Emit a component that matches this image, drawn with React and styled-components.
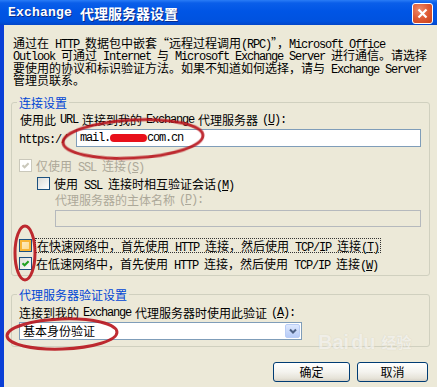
import React from 'react'
import styled, { createGlobalStyle } from 'styled-components'

const Global = createGlobalStyle`
  html, body { margin: 0; padding: 0; background: #fff; }
  body { font-family: "Noto Sans CJK SC", "DejaVu Sans", sans-serif; }
`

const Lat = styled.span`
  font-family: "Liberation Mono", "DejaVu Sans Mono", monospace;
  font-size: 12px;
  letter-spacing: -1.2px;
  line-height: 0;
`

// split ascii runs into the narrow mono font, "&X" underlines X
const mix = (s) =>
  s.split(/([\x20-\x7e]+)/).map((part, i) => {
    if (!part) return null
    if (/^[\x20-\x7e]+$/.test(part)) {
      const bits = part.split(/&(.)/)
      return (
        <Lat key={i}>
          {bits.map((b, j) => (j % 2 ? <u key={j}>{b}</u> : b))}
        </Lat>
      )
    }
    return <React.Fragment key={i}>{part}</React.Fragment>
  })

const Window = styled.div`
  position: relative;
  width: 437px;
  height: 387px;
  overflow: hidden;
  background: #ece9d8;
  font-size: 12px;
  color: #000;
`

const TitleBar = styled.div`
  height: 25px;
  display: flex;
  align-items: center;
  justify-content: space-between;
  padding: 0 4px 0 8px;
  background: linear-gradient(#2a7cf6 0%, #0a5ee9 12%, #0055e5 45%, #0052df 85%, #0346c9 100%);
`

const Title = styled.div`
  color: #fff;
  font-weight: bold;
  font-size: 14px;
  line-height: 16px;
  text-shadow: 1px 1px 0 #0a2c8a;
  display: flex;
  align-items: center;
  gap: 8px;
`

const TitleLat = styled.span`
  font-family: "Liberation Mono", monospace;
  font-size: 13px;
  letter-spacing: 0.2px;
`

const Close = styled.div`
  width: 19px;
  height: 19px;
  border: 1px solid #fff;
  border-radius: 3px;
  background: radial-gradient(circle at 35% 30%, #ee8b6c 0%, #df5a33 50%, #c7401a 100%);
  display: flex;
  align-items: center;
  justify-content: center;
  margin-top: 1px;
`

const Body = styled.div`
  height: 362px;
  box-sizing: border-box;
  border-left: 4px solid #0a3fd6;
  padding: 0 7px;
  display: flex;
  flex-direction: column;
  & > * { flex-shrink: 0; }
`

const Desc = styled.div`
  margin: 12px 0 0 2px;
  white-space: nowrap;
`

const DescLine = styled.div`
  height: 12.4px;
  line-height: 12.4px;
`

const Group = styled.fieldset`
  margin: ${(p) => p.$top}px 0 0 0;
  padding: 0 8px ${(p) => p.$bottom}px 7px;
  border: 1px solid #d0d0bf;
  border-radius: 3px;
  min-inline-size: 0;
  display: flex;
  flex-direction: column;
  & > * { flex-shrink: 0; }
`

const Legend = styled.legend`
  color: #0046d5;
  padding: 0 2px;
  margin-left: -2px;
  line-height: 14px;
  font-size: 12px;
`

const Line = styled.div`
  height: 14px;
  line-height: 14px;
  white-space: nowrap;
  margin-top: ${(p) => p.$top || 0}px;
  margin-left: ${(p) => p.$indent || 0}px;
  color: ${(p) => (p.$disabled ? '#aca899' : '#000')};
  display: flex;
  align-items: center;
  gap: 4px;
`

const UrlRow = styled.div`
  display: flex;
  align-items: center;
  gap: 9px;
  margin-top: 2px;
`

const Field = styled.div`
  flex: ${(p) => (p.$grow ? '1 1 auto' : 'none')};
  height: ${(p) => p.$h || 18}px;
  box-sizing: border-box;
  border: 1px solid ${(p) => (p.$disabled ? '#b5b9bd' : '#7f9db9')};
  background: ${(p) => (p.$disabled ? '#ece9d8' : '#fff')};
  display: flex;
  align-items: center;
  padding-left: 3px;
  margin-top: ${(p) => p.$top || 0}px;
  margin-left: ${(p) => p.$indent || 0}px;
  white-space: nowrap;
`

const Blot = styled.span`
  display: inline-block;
  width: 37px;
  height: 8px;
  border-radius: 5px;
  background: #e8101a;
`

const Box = styled.span`
  flex: none;
  width: 13px;
  height: 13px;
  box-sizing: border-box;
  border: 1px solid ${(p) => (p.$state === 'disabled' ? '#cac8bb' : '#1c5180')};
  background: ${(p) =>
    p.$state === 'disabled'
      ? '#fff'
      : p.$state === 'hot'
      ? 'linear-gradient(135deg, #fff0cf, #fbd783)'
      : 'linear-gradient(135deg, #dcdcd7, #ffffff)'};
  box-shadow: ${(p) => (p.$state === 'hot' ? 'inset 0 0 0 2px #f8b636' : 'none')};
  display: flex;
  align-items: center;
  justify-content: center;
`

const Focus = styled.span`
  outline: 1px dotted #333;
  padding: 0 1px;
  line-height: 13px;
`

const Check = ({ color }) => (
  <svg width="9" height="9" viewBox="0 0 9 9">
    <polyline points="1.5,4.2 3.6,6.3 7.6,2.2" fill="none" stroke={color} strokeWidth="2" />
  </svg>
)

const Select = styled.div`
  width: 283px;
  height: 18px;
  box-sizing: border-box;
  border: 1px solid #7f9db9;
  background: #fff;
  display: flex;
  align-items: center;
  justify-content: space-between;
  padding: 0 1px 0 3px;
  margin-top: 2px;
`

const DropBtn = styled.span`
  width: 15px;
  height: 14px;
  box-sizing: border-box;
  border: 1px solid #b9cdf6;
  border-radius: 2px;
  background: linear-gradient(#dde8fe, #b6cbf7);
  display: flex;
  align-items: center;
  justify-content: center;
`

const Buttons = styled.div`
  display: flex;
  justify-content: flex-end;
  gap: 7px;
  margin: 15px 2px 0 0;
`

const Button = styled.div`
  width: ${(p) => p.$w}px;
  height: 20px;
  box-sizing: border-box;
  border: 1px solid #003c74;
  border-radius: 3px;
  background: linear-gradient(#ffffff 0%, #f4f3ee 50%, #e6e3d8 85%, #d6d0c5 100%);
  display: flex;
  align-items: center;
  justify-content: center;
  font-size: 12px;
`

const Marks = styled.svg`
  position: absolute;
  left: 0;
  top: 0;
  pointer-events: none;
`

const Watermark = styled.div`
  position: absolute;
  left: 318px;
  top: 332px;
  color: rgba(255, 255, 255, 0.8);
  text-shadow: 0 0 1px #c4c0b4;
  font-family: "Liberation Sans", sans-serif;
  font-weight: bold;
  font-size: 20px;
  line-height: 20px;
  display: flex;
  align-items: flex-end;
  gap: 2px;
  opacity: 0.7;
`

const Small = styled.span`
  font-family: "Noto Sans CJK SC", sans-serif;
  font-size: 15px;
  margin-left: 4px;
`

export default function App() {
  return (
    <>
      <Global />
      <Window>
        <TitleBar>
          <Title>
            <TitleLat>Exchange</TitleLat>
            <span>代理服务器设置</span>
          </Title>
          <Close>
            <svg width="11" height="11" viewBox="0 0 11 11">
              <path d="M1.5 1.5 L9.5 9.5 M9.5 1.5 L1.5 9.5" stroke="#fff" strokeWidth="2.2" />
            </svg>
          </Close>
        </TitleBar>
        <Body>
          <Desc>
            <DescLine>{mix('通过在 HTTP 数据包中嵌套“远程过程调用(RPC)”，Microsoft Office')}</DescLine>
            <DescLine>{mix('Outlook 可通过 Internet 与 Microsoft Exchange Server 进行通信。请选择')}</DescLine>
            <DescLine>{mix('要使用的协议和标识验证方法。如果不知道如何选择，请与 Exchange Server')}</DescLine>
            <DescLine>{mix('管理员联系。')}</DescLine>
          </Desc>

          <Group $top={9} $bottom={4}>
            <Legend>连接设置</Legend>
            <Line $top={3} $indent={1}>{mix('使用此 URL 连接到我的 Exchange 代理服务器(&U):')}</Line>
            <UrlRow>
              <span>{mix('https://')}</span>
              <Field $grow>
                <Lat>mail.</Lat>
                <Blot />
                <Lat>com.cn</Lat>
              </Field>
            </UrlRow>
            <Line $top={12} $disabled>
              <Box $state="disabled">
                <Check color="#cac8bb" />
              </Box>
              <span>{mix('仅使用 SSL 连接(&S)')}</span>
            </Line>
            <Line $top={4} $indent={18}>
              <Box />
              <span>{mix('使用 SSL 连接时相互验证会话(&M)')}</span>
            </Line>
            <Line $top={2} $indent={36} $disabled>
              {mix('代理服务器的主体名称(&P):')}
            </Line>
            <Field $top={3} $indent={36} $h={17} $disabled />
            <Line $top={12}>
              <Box $state="hot" />
              <Focus>{mix('在快速网络中，首先使用 HTTP 连接，然后使用 TCP/IP 连接(&T)')}</Focus>
            </Line>
            <Line $top={4}>
              <Box>
                <Check color="#21a121" />
              </Box>
              <span>{mix('在低速网络中，首先使用 HTTP 连接，然后使用 TCP/IP 连接(&W)')}</span>
            </Line>
          </Group>

          <Group $top={12} $bottom={6}>
            <Legend>代理服务器验证设置</Legend>
            <Line $top={4}>{mix('连接到我的 Exchange 代理服务器时使用此验证(&A):')}</Line>
            <Select>
              <span>基本身份验证</span>
              <DropBtn>
                <svg width="8" height="6" viewBox="0 0 8 6">
                  <polyline points="1,1.5 4,4.5 7,1.5" fill="none" stroke="#4d6185" strokeWidth="2" />
                </svg>
              </DropBtn>
            </Select>
          </Group>

          <Buttons>
            <Button $w={77}>确定</Button>
            <Button $w={71}>取消</Button>
          </Buttons>
        </Body>

        <Watermark>
          <span>Bai</span>
          <span>du</span>
          <Small>经验</Small>
        </Watermark>

        <Marks width="437" height="387" viewBox="0 0 437 387">
          <g fill="none" stroke="#b8141c" strokeWidth="3" opacity="0.9">
            <ellipse cx="133" cy="139" rx="70" ry="19" transform="rotate(-3 133 139)" />
            <ellipse cx="25" cy="253" rx="10" ry="27" />
            <ellipse cx="62" cy="334" rx="55" ry="15" transform="rotate(-2 62 334)" />
          </g>
        </Marks>
      </Window>
    </>
  )
}
